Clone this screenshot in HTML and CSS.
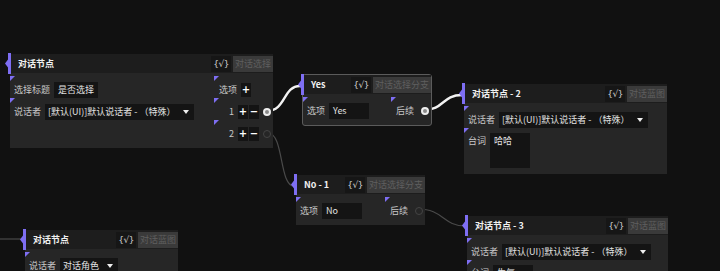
FILE: index.html
```html
<!DOCTYPE html>
<html lang="zh">
<head>
    <meta charset="UTF-8">
    <meta name="viewport" content="width=device-width, initial-scale=1.0">
    <title>对话图</title>
    <link rel="stylesheet" href="styles.css">
</head>
<body>
    <div class="canvas">
        <!-- 连线 -->
        <svg class="wires" width="720" height="271" viewBox="0 0 720 271">
            <path class="wire" d="M0 239 L22 239"/>
            <path class="wire active" d="M267 111 C286 111, 283 86, 300 86"/>
            <path class="wire" d="M268 133 C284 133, 279 186, 294 186"/>
            <path class="wire active" d="M424 110 C444 110, 442 95, 462 95"/>
            <path class="wire" d="M418 209 C444 209, 442 226, 466 226"/>
        </svg>

        <div class="node n-choice">
            <div class="node-head">
                <svg class="port-in" width="7" height="21" viewBox="0 0 7 21"><rect x="3" y="0" width="3" height="21"/><path d="M3 6.5 L0 10.5 L3 14.5 Z"/></svg>
                <span class="node-title">对话节点</span>
                <span class="flag">{√}</span>
                <span class="kind">对话选择</span>
            </div>
            <div class="node-body">
                <div class="col">
                    <div class="row"><span class="label">选择标题</span><span class="field">是否选择</span></div>
                    <div class="row"><span class="label">说话者</span><span class="select">[默认(UI)]默认说话者 - （特殊）</span></div>
                </div>
                <div class="col">
                    <div class="row out first"><span class="label">选项</span><span class="btn">+</span></div>
                    <div class="row out"><span class="label">1</span><span class="btn">+</span><span class="btn">−</span><span class="port on"></span></div>
                    <div class="row out"><span class="label">2</span><span class="btn">+</span><span class="btn">−</span><span class="port"></span></div>
                </div>
            </div>
        </div>

        <div class="node selected n-yes">
            <div class="node-head">
                <svg class="port-in" width="7" height="21" viewBox="0 0 7 21"><rect x="3" y="0" width="3" height="21"/><path d="M3 6.5 L0 10.5 L3 14.5 Z"/></svg>
                <span class="node-title">Yes</span>
                <span class="flag">{√}</span>
                <span class="kind">对话选择分支</span>
            </div>
            <div class="node-body">
                <div class="col">
                    <div class="row"><span class="label">选项</span><span class="field fixed">Yes</span></div>
                </div>
                <div class="col">
                    <div class="row out"><span class="label">后续</span><span class="port on"></span></div>
                </div>
            </div>
        </div>

        <div class="node n-talk2">
            <div class="node-head">
                <svg class="port-in" width="7" height="21" viewBox="0 0 7 21"><rect x="3" y="0" width="3" height="21"/><path d="M3 6.5 L0 10.5 L3 14.5 Z"/></svg>
                <span class="node-title">对话节点 - 2</span>
                <span class="flag">{√}</span>
                <span class="kind">对话蓝图</span>
            </div>
            <div class="node-body">
                <div class="col">
                    <div class="row"><span class="label">说话者</span><span class="select">[默认(UI)]默认说话者 - （特殊）</span></div>
                    <div class="row tall"><span class="label">台词</span><span class="field area">哈哈</span></div>
                </div>
            </div>
        </div>

        <div class="node n-no">
            <div class="node-head">
                <svg class="port-in" width="7" height="21" viewBox="0 0 7 21"><rect x="3" y="0" width="3" height="21"/><path d="M3 6.5 L0 10.5 L3 14.5 Z"/></svg>
                <span class="node-title">No - 1</span>
                <span class="flag">{√}</span>
                <span class="kind">对话选择分支</span>
            </div>
            <div class="node-body">
                <div class="col">
                    <div class="row"><span class="label">选项</span><span class="field fixed">No</span></div>
                </div>
                <div class="col">
                    <div class="row out"><span class="label">后续</span><span class="port"></span></div>
                </div>
            </div>
        </div>

        <div class="node n-talk3">
            <div class="node-head">
                <svg class="port-in" width="7" height="21" viewBox="0 0 7 21"><rect x="3" y="0" width="3" height="21"/><path d="M3 6.5 L0 10.5 L3 14.5 Z"/></svg>
                <span class="node-title">对话节点 - 3</span>
                <span class="flag">{√}</span>
                <span class="kind">对话蓝图</span>
            </div>
            <div class="node-body">
                <div class="col">
                    <div class="row"><span class="label">说话者</span><span class="select">[默认(UI)]默认说话者 - （特殊）</span></div>
                    <div class="row tall"><span class="label">台词</span><span class="field area">生气</span></div>
                </div>
            </div>
        </div>

        <div class="node n-talk">
            <div class="node-head">
                <svg class="port-in" width="7" height="21" viewBox="0 0 7 21"><rect x="3" y="0" width="3" height="21"/><path d="M3 6.5 L0 10.5 L3 14.5 Z"/></svg>
                <span class="node-title">对话节点</span>
                <span class="flag">{√}</span>
                <span class="kind">对话蓝图</span>
            </div>
            <div class="node-body">
                <div class="col">
                    <div class="row"><span class="label">说话者</span><span class="select">对话角色</span></div>
                </div>
            </div>
        </div>
    </div>
</body>
</html>
```

FILE: styles.css
```css
/* 画布 */
body {
    margin: 0;
    background: #111;
    font-family: "Noto Sans CJK SC", "Noto Sans", sans-serif;
    font-size: 9px;
}

.canvas {
    position: relative;
    width: 720px;
    height: 271px;
    overflow: hidden;
    background: #111;
}

.wires {
    position: absolute;
    left: 0;
    top: 0;
}

.wire {
    fill: none;
    stroke: #4a4a4a;
    stroke-width: 1.2;
}

.wire.active {
    stroke: #f2f2f2;
    stroke-width: 2.4;
}

/* 节点位置 */
.n-choice { left: 10px; top: 54px; width: 263px; }
.n-yes    { left: 302px; top: 74px; width: 130px; }
.n-talk2  { left: 464px; top: 84px; width: 203px; }
.n-no     { left: 296px; top: 175px; width: 129px; }
.n-talk3  { left: 467px; top: 216px; width: 201px; }
.n-talk   { left: 25px; top: 230px; width: 153px; }

/* 节点 */
.node {
    position: absolute;
    box-sizing: border-box;
    background: #262626;
}

.node.selected {
    border: 1px solid #5b5b5b;
    border-radius: 3px;
}

.node-head {
    position: relative;
    display: flex;
    align-items: center;
    height: 19px;
    padding-left: 8px;
    background: #1d1d1d;
}

.port-in {
    position: absolute;
    left: -5px;
    top: -1px;
    fill: #7e6ef3;
}

.node-title {
    flex: 1;
    color: #f0f0f0;
    font-weight: bold;
    white-space: nowrap;
}

.flag {
    height: 16px;
    line-height: 16px;
    padding: 0 2px;
    background: #161616;
    color: #cfcfcf;
    font-family: "DejaVu Sans", sans-serif;
    font-size: 9px;
    letter-spacing: -0.5px;
}

.kind {
    height: 16px;
    line-height: 16px;
    padding: 0 2px;
    margin-left: 2px;
    background: #3a3a3a;
    color: #5f5f5f;
    white-space: nowrap;
}

.node-body {
    display: flex;
    justify-content: space-between;
    padding: 3px 0 6px;
}

.row {
    position: relative;
    display: flex;
    align-items: center;
    gap: 4px;
    height: 17px;
    padding: 5px 4px 0;
}

.row::before {
    content: '';
    position: absolute;
    left: 0;
    top: 0;
    border-top: 5px solid #7e6ef3;
    border-right: 5px solid transparent;
}

.row.tall {
    height: auto;
    align-items: flex-start;
}

.label {
    color: #c8c8c8;
    white-space: nowrap;
    line-height: 16px;
}

.field {
    height: 16px;
    line-height: 16px;
    padding: 0 4px;
    background: #141414;
    color: #e2e2e2;
    white-space: nowrap;
}

.field.fixed {
    width: 40px;
    box-sizing: border-box;
}

.field.area {
    width: 40px;
    height: 35px;
    box-sizing: border-box;
}

.select {
    display: flex;
    align-items: center;
    gap: 8px;
    height: 16px;
    padding: 0 5px 0 3px;
    background: #141414;
    color: #e2e2e2;
    white-space: nowrap;
}

.select::after {
    content: '';
    border-top: 4px solid #eee;
    border-left: 3px solid transparent;
    border-right: 3px solid transparent;
}

/* 输出端口 */
.out {
    justify-content: flex-end;
    gap: 1px;
    padding-left: 5px;
    padding-right: 2px;
}

.out.first {
    padding-right: 22px;
}

.out .label {
    margin-right: 3px;
}

.btn {
    width: 10px;
    height: 14px;
    line-height: 14px;
    text-align: center;
    background: #141414;
    color: #fff;
    font-family: "DejaVu Sans", sans-serif;
    font-size: 10px;
    font-weight: bold;
}

.port {
    width: 8px;
    height: 8px;
    margin-left: 3px;
    box-sizing: border-box;
    border: 1px solid #444;
    border-radius: 50%;
}

.port.on {
    border: 2px solid #eee;
    background: #8a8a8a;
}
```
